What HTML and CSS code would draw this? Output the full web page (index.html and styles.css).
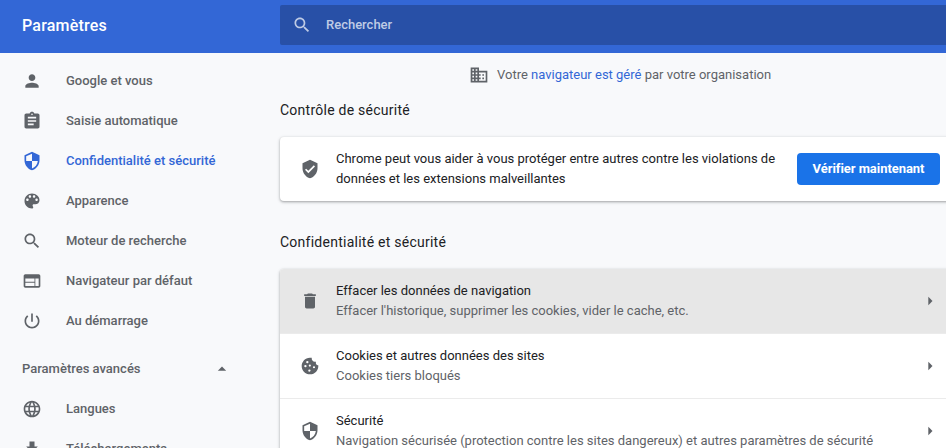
FILE: index.html
```html
<!DOCTYPE html>
<html lang="fr">
<head>
<meta charset="utf-8">
<title>Paramètres</title>
<link rel="stylesheet" href="styles.css">
</head>
<body>
<header class="toolbar">
  <h1 class="title">Paramètres</h1>
  <div class="search">
    <svg class="icon" viewBox="0 0 24 24"><path d="M15.5 14h-.79l-.28-.27C15.41 12.59 16 11.11 16 9.5 16 5.91 13.09 3 9.5 3S3 5.91 3 9.5 5.91 16 9.5 16c1.61 0 3.09-.59 4.23-1.57l.27.28v.79l5 4.99L20.49 19l-4.99-5zm-6 0C7.01 14 5 11.99 5 9.5S7.01 5 9.5 5 14 7.01 14 9.5 11.99 14 9.5 14z"/></svg>
    <span>Rechercher</span>
  </div>
</header>
<div class="container">
  <nav class="sidebar">
    <a class="item"><svg class="icon" viewBox="0 0 24 24"><path d="M12 12c2.21 0 4-1.79 4-4s-1.79-4-4-4-4 1.79-4 4 1.79 4 4 4zm0 2c-2.67 0-8 1.34-8 4v2h16v-2c0-2.66-5.33-4-8-4z"/></svg><span>Google et vous</span></a>
    <a class="item"><svg class="icon" viewBox="0 0 24 24"><path d="M19 3h-4.18C14.4 1.84 13.3 1 12 1c-1.3 0-2.4.84-2.82 2H5c-1.1 0-2 .9-2 2v14c0 1.1.9 2 2 2h14c1.1 0 2-.9 2-2V5c0-1.1-.9-2-2-2zm-7 0c.55 0 1 .45 1 1s-.45 1-1 1-1-.45-1-1 .45-1 1-1zm2 14H7v-2h7v2zm3-4H7v-2h10v2zm0-4H7V7h10v2z"/></svg><span>Saisie automatique</span></a>
    <a class="item selected"><svg class="icon" viewBox="0 0 24 24"><path d="M12 1L3 5v6c0 5.55 3.84 10.74 9 12 5.16-1.26 9-6.45 9-12V5l-9-4zm0 10.99h7c-.53 4.12-3.28 7.79-7 8.94V12H5V6.3l7-3.11v8.8z"/></svg><span>Confidentialité et sécurité</span></a>
    <a class="item"><svg class="icon" viewBox="0 0 24 24"><path d="M12 3c-4.97 0-9 4.03-9 9s4.03 9 9 9c.83 0 1.5-.67 1.5-1.5 0-.39-.15-.74-.39-1.01-.23-.26-.38-.61-.38-.99 0-.83.67-1.5 1.5-1.5H16c2.76 0 5-2.24 5-5 0-4.42-4.03-8-9-8zm-5.500 9c-.83 0-1.500-.67-1.500-1.500S5.670 9 6.500 9 8 9.670 8 10.500 7.330 12 6.500 12zm3-4C8.670 8 8 7.330 8 6.500S8.670 5 9.500 5s1.500.67 1.500 1.500S10.330 8 9.500 8zm5 0c-.83 0-1.500-.67-1.500-1.500S13.670 5 14.500 5s1.500.67 1.500 1.500S15.330 8 14.500 8zm3 4c-.83 0-1.500-.67-1.500-1.500S16.670 9 17.500 9s1.500.67 1.500 1.500-.67 1.500-1.500 1.500z"/></svg><span>Apparence</span></a>
    <a class="item"><svg class="icon" viewBox="0 0 24 24"><path d="M15.5 14h-.79l-.28-.27C15.41 12.59 16 11.11 16 9.5 16 5.91 13.09 3 9.5 3S3 5.91 3 9.5 5.91 16 9.5 16c1.61 0 3.09-.59 4.23-1.57l.27.28v.79l5 4.99L20.49 19l-4.99-5zm-6 0C7.01 14 5 11.99 5 9.5S7.01 5 9.5 5 14 7.01 14 9.5 11.99 14 9.5 14z"/></svg><span>Moteur de recherche</span></a>
    <a class="item"><svg class="icon" viewBox="0 0 24 24"><path d="M20 4H4c-1.1 0-2 .9-2 2v12c0 1.1.9 2 2 2h16c1.1 0 2-.9 2-2V6c0-1.1-.9-2-2-2zm-5 14H4v-4h11v4zm0-5H4V9h11v4zm5 5h-4V9h4v9z"/></svg><span>Navigateur par défaut</span></a>
    <a class="item"><svg class="icon" viewBox="0 0 24 24"><path d="M13 3h-2v10h2V3zm4.83 2.17l-1.42 1.42C17.99 7.86 19 9.81 19 12c0 3.87-3.13 7-7 7s-7-3.13-7-7c0-2.19 1.01-4.14 2.58-5.42L6.17 5.17C4.23 6.82 3 9.26 3 12c0 4.97 4.03 9 9 9s9-4.03 9-9c0-2.74-1.23-5.18-3.17-6.83z"/></svg><span>Au démarrage</span></a>
    <button class="advanced"><span>Paramètres avancés</span><svg class="icon" viewBox="0 0 24 24"><path d="M7 14l5-5 5 5z"/></svg></button>
    <a class="item"><svg class="icon" viewBox="0 0 24 24"><path d="M11.99 2C6.47 2 2 6.48 2 12s4.47 10 9.99 10C17.52 22 22 17.52 22 12S17.52 2 11.99 2zm6.93 6h-2.95c-.32-1.25-.78-2.45-1.38-3.56 1.84.63 3.37 1.91 4.33 3.56zM12 4.04c.83 1.2 1.48 2.53 1.91 3.96h-3.82c.43-1.43 1.08-2.76 1.91-3.96zM4.26 14C4.1 13.36 4 12.69 4 12s.1-1.36.26-2h3.38c-.08.66-.14 1.32-.14 2 0 .68.06 1.34.14 2H4.26zm.82 2h2.95c.32 1.25.78 2.45 1.38 3.56-1.84-.63-3.37-1.9-4.33-3.56zm2.95-8H5.08c.96-1.66 2.49-2.93 4.33-3.56C8.81 5.55 8.35 6.75 8.03 8zM12 19.96c-.83-1.2-1.48-2.53-1.91-3.96h3.82c-.43 1.43-1.08 2.76-1.91 3.96zM14.34 14H9.66c-.09-.66-.16-1.32-.16-2 0-.68.07-1.35.16-2h4.68c.09.65.16 1.32.16 2 0 .68-.07 1.34-.16 2zm.25 5.56c.6-1.11 1.06-2.31 1.38-3.56h2.95c-.96 1.65-2.49 2.93-4.33 3.56zM16.36 14c.08-.66.14-1.32.14-2 0-.68-.06-1.34-.14-2h3.38c.16.64.26 1.31.26 2s-.1 1.36-.26 2h-3.38z"/></svg><span>Langues</span></a>
    <a class="item"><svg class="icon" viewBox="0 0 24 24"><path d="M19 9h-4V3H9v6H5l7 7 7-7zM5 18v2h14v-2H5z"/></svg><span>Téléchargements</span></a>
  </nav>
  <main class="main">
    <div class="managed">
      <svg class="icon" viewBox="0 0 24 24"><path d="M12 7V3H2v18h20V7H12zM6 19H4v-2h2v2zm0-4H4v-2h2v2zm0-4H4V9h2v2zm0-4H4V5h2v2zm4 12H8v-2h2v2zm0-4H8v-2h2v2zm0-4H8V9h2v2zm0-4H8V5h2v2zm10 12h-8v-2h2v-2h-2v-2h2v-2h-2V9h8v10zm-2-8h-2v2h2v-2zm0 4h-2v2h2v-2z"/></svg>
      <span>Votre <a class="link">navigateur est géré</a> par votre organisation</span>
    </div>
    <h2 class="heading">Contrôle de sécurité</h2>
    <section class="card safety">
      <svg class="icon" viewBox="0 0 24 24"><path d="M12 1L3 5v6c0 5.55 3.84 10.74 9 12 5.16-1.26 9-6.45 9-12V5l-9-4zm-2 16l-4-4 1.41-1.41L10 14.17l6.59-6.59L18 9l-8 8z"/></svg>
      <p class="message">Chrome peut vous aider à vous protéger entre autres contre les violations de<br>données et les extensions malveillantes</p>
      <button class="action">Vérifier maintenant</button>
    </section>
    <h2 class="heading privacy">Confidentialité et sécurité</h2>
    <section class="card">
      <div class="row hovered">
        <svg class="icon" viewBox="0 0 24 24"><path d="M6 19c0 1.1.9 2 2 2h8c1.1 0 2-.9 2-2V7H6v12zM19 4h-3.5l-1-1h-5l-1 1H5v2h14V4z"/></svg>
        <div class="text"><div>Effacer les données de navigation</div><div class="sub">Effacer l'historique, supprimer les cookies, vider le cache, etc.</div></div>
        <svg class="arrow" viewBox="0 0 24 24"><path d="M10 17l5-5-5-5z"/></svg>
      </div>
      <div class="row">
        <svg class="icon" viewBox="0 0 24 24"><path fill-rule="evenodd" d="M21.95 10.99c-1.79-.03-3.7-1.95-2.68-4.22-2.97 1-5.78-1.59-5.19-4.56C7.11.74 2 6.41 2 12c0 5.52 4.48 10 10 10 5.89 0 10.54-5.08 9.95-11.01zM6.500 13.500a1.400 1.400 0 1 1 0-2.800 1.400 1.400 0 0 1 0 2.800zM8.800 8.700a1.400 1.400 0 1 1 0-2.800 1.400 1.400 0 0 1 0 2.800zM11.800 12.800a1.300 1.300 0 1 1 0-2.600 1.300 1.300 0 0 1 0 2.600zM16.800 14.800a1.300 1.300 0 1 1 0-2.600 1.300 1.300 0 0 1 0 2.600zM11.300 18.900a1.400 1.400 0 1 1 0-2.800 1.400 1.400 0 0 1 0 2.800z"/></svg>
        <div class="text"><div>Cookies et autres données des sites</div><div class="sub">Cookies tiers bloqués</div></div>
        <svg class="arrow" viewBox="0 0 24 24"><path d="M10 17l5-5-5-5z"/></svg>
      </div>
      <div class="row">
        <svg class="icon" viewBox="0 0 24 24"><path d="M12 1L3 5v6c0 5.55 3.84 10.74 9 12 5.16-1.26 9-6.45 9-12V5l-9-4zm0 10.99h7c-.53 4.12-3.28 7.79-7 8.94V12H5V6.3l7-3.11v8.8z"/></svg>
        <div class="text"><div>Sécurité</div><div class="sub">Navigation sécurisée (protection contre les sites dangereux) et autres paramètres de sécurité</div></div>
        <svg class="arrow" viewBox="0 0 24 24"><path d="M10 17l5-5-5-5z"/></svg>
      </div>
    </section>
  </main>
</div>
</body>
</html>
```

FILE: styles.css
```css
* { box-sizing: border-box; }
body {
  margin: 0;
  height: 448px;
  overflow: hidden;
  background: #f8f9fb;
  color: #202124;
  font: 13px/20px Roboto, "Liberation Sans", sans-serif;
}
h1, h2, p { margin: 0; }
button { border: 0; font: inherit; }
.icon, .arrow { width: 20px; height: 20px; flex: none; fill: #5f6368; }

.toolbar {
  display: flex;
  height: 53px;
  padding-top: 5px;
  background: #3367d6;
  color: #fff;
}
.title {
  width: 280px;
  padding-left: 22px;
  font-size: 16px;
  font-weight: 500;
  line-height: 42px;
  letter-spacing: .2px;
}
.search {
  display: flex;
  flex: 1;
  align-items: center;
  gap: 14px;
  height: 40px;
  padding-left: 12px;
  border-radius: 2px 0 0 2px;
  background: #2850a7;
  color: #bfcbe5;
  font-weight: 500;
}
.search .icon { fill: #bfcbe5; }

.container { display: flex; height: 395px; overflow: hidden; }
.sidebar {
  width: 280px;
  flex: none;
  padding: 8px 48px 0 22px;
  color: #5f6368;
  font-weight: 500;
}
.item { display: flex; align-items: center; gap: 24px; height: 40px; }
.selected { color: #3367d6; }
.selected .icon { fill: #3367d6; }
.advanced {
  display: flex;
  align-items: center;
  justify-content: space-between;
  width: 210px;
  height: 40px;
  margin-top: 8px;
  padding: 0;
  background: none;
  color: inherit;
}

.main { flex: 1; min-width: 0; }
.managed {
  display: flex;
  align-items: center;
  gap: 8px;
  height: 44px;
  padding-left: 189px;
  color: #5f6368;
}
.link { color: #3367d6; }
.heading {
  height: 40px;
  padding-top: 3px;
  font-size: 14px;
  font-weight: 400;
  letter-spacing: .25px;
}
.privacy { height: 68px; padding-top: 31px; }
.card {
  width: 680px;
  border-radius: 4px;
  background: #fff;
  box-shadow: 0 1px 2px 0 rgba(60, 64, 67, .3), 0 1px 3px 1px rgba(60, 64, 67, .15);
  overflow: hidden;
}
.safety { display: flex; align-items: center; height: 64px; padding: 0 20px; }
.message { width: 461px; margin-left: 16px; white-space: nowrap; }
.action {
  width: 143px;
  height: 32px;
  padding: 0;
  border-radius: 4px;
  background: #1a73e8;
  color: #fff;
  font-weight: 700;
  letter-spacing: -.05px;
}
.row { display: flex; align-items: center; height: 65px; padding: 0 20px; }
.row + .row { border-top: 1px solid #ebebeb; }
.hovered { height: 64px; background: #e7e7e7; }
.text { flex: 1; margin-left: 16px; white-space: nowrap; }
.sub { color: #5f6368; }
```
